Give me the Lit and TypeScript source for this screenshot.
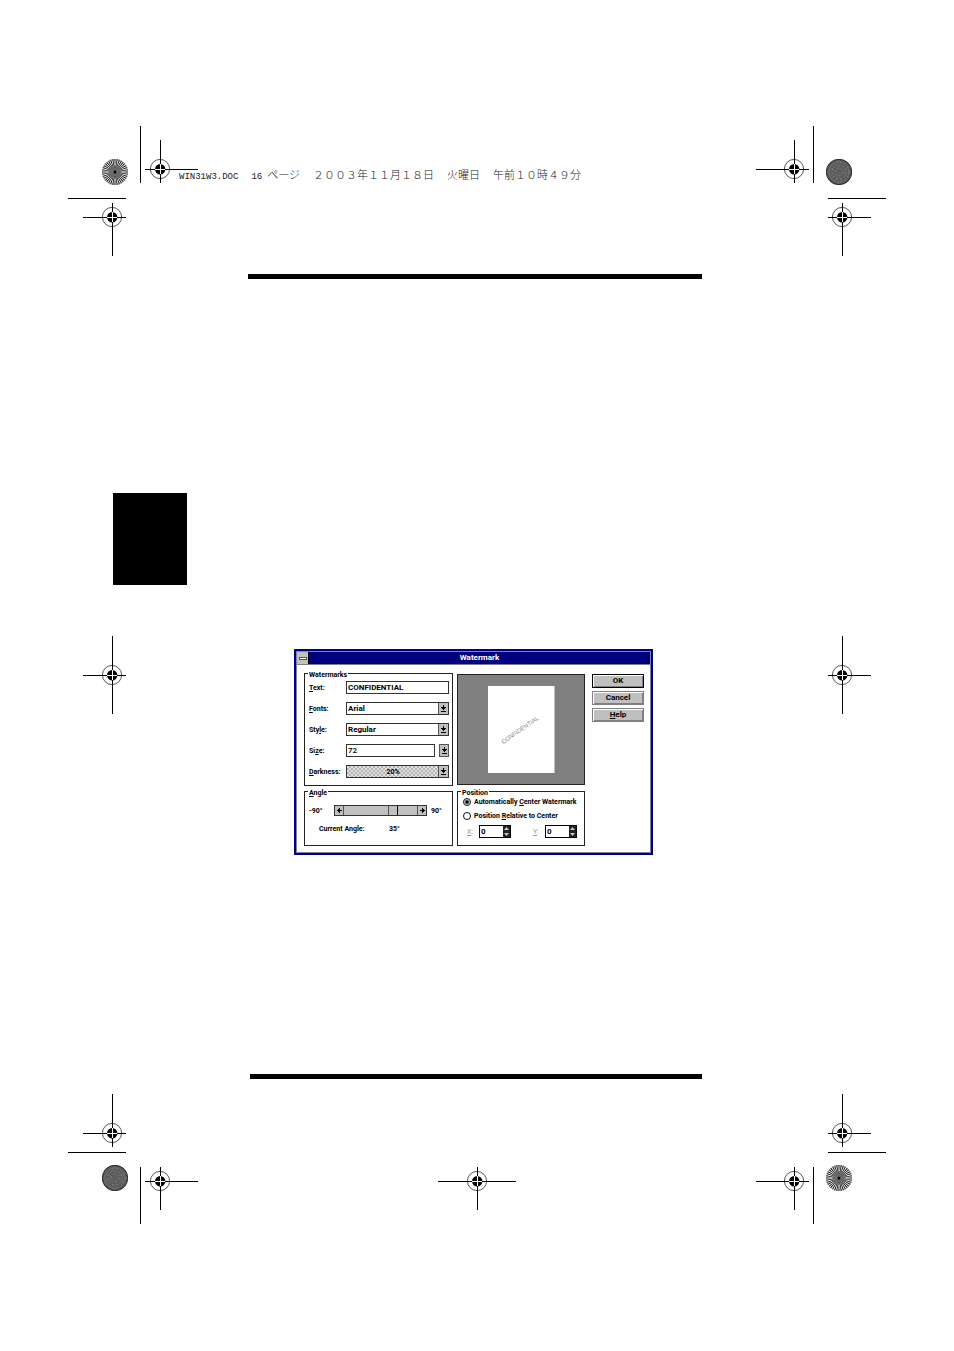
import { LitElement, html, svg, css } from "lit";
import { customElement, state } from "lit/decorators.js";

type Box = [x: number, y: number, left: number, right: number, top: number, bottom: number];

/* Registration mark centred on (x, y), with hairlines reaching to the given edges. */
const registration = ([x, y, left, right, top, bottom]: Box) => svg`
  <circle cx=${x} cy=${y} r="9.6" fill="none" stroke="#444" stroke-width="0.9" />
  <g shape-rendering="crispEdges">
    <rect x=${left} y=${y} width=${right - left} height="1" />
    <rect x=${x} y=${top} width="1" height=${bottom - top} />
  </g>
  <circle cx=${x + 0.2} cy=${y + 0.2} r="5.2" />
  <g fill="#fff" shape-rendering="crispEdges">
    <rect x=${x - 5} y=${y} width="10" height="1" />
    <rect x=${x} y=${y - 5} width="1" height="10" />
  </g>`;

const bar = (x: number, y: number, width: number, height: number) =>
  svg`<rect x=${x} y=${y} width=${width} height=${height} shape-rendering="crispEdges" />`;

/* Star target: tapering wedges on a pale disc, or a dense mesh on a dark one. */
const star = (x: number, y: number, dense: boolean) => {
  const count = dense ? 60 : 36;
  const point = (a: number, r: number) => `${x + r * Math.cos(a)} ${y + r * Math.sin(a)}`;
  const half = Math.PI / count / 2;
  const wedges = Array.from({ length: count }, (_, i) => {
    const a = (i * 2 * Math.PI) / count;
    return `M${x} ${y}L${point(a - half, 13)}L${point(a + half, 13)}z`;
  }).join("");
  return dense
    ? svg`
      <circle cx=${x} cy=${y} r="13" fill="#777" />
      <path d=${wedges} fill="#444" />
      <g fill="none" stroke="#888" stroke-width="0.8" stroke-dasharray="2 2">
        <circle cx=${x} cy=${y} r="4" /><circle cx=${x} cy=${y} r="7" /><circle cx=${x} cy=${y} r="10" />
      </g>
      <circle cx=${x} cy=${y} r="12.6" fill="none" stroke="#222" stroke-width="0.8" />`
    : svg`
      <circle cx=${x} cy=${y} r="7" fill="#ccc" />
      <path d=${wedges} />
      <circle cx=${x} cy=${y} r="12.6" fill="none" stroke="#777" stroke-width="0.6" />
      <circle cx=${x} cy=${y} r="1.5" />`;
};

const arrowDown = html`<svg width="5" height="7" viewBox="0 0 5 7" shape-rendering="crispEdges" aria-hidden="true">
  <path d="M2 0h1v2h2v1h-1v1h-1v1h-1v-1h-1v-1h-1v-1h2zM0 6h5v1h-5z" />
</svg>`;
const arrowLeft = html`<svg width="5" height="5" viewBox="0 0 5 5" shape-rendering="crispEdges" aria-hidden="true">
  <path d="M2 0h1v2h2v1h-2v2h-1v-1h-1v-1h-1v-1h1v-1h1z" />
</svg>`;
const arrowRight = html`<svg width="5" height="5" viewBox="0 0 5 5" shape-rendering="crispEdges" aria-hidden="true">
  <path d="M2 0h1v1h1v1h1v1h-1v1h-1v1h-1v-2h-2v-1h2z" />
</svg>`;

@customElement("watermark-dialog")
export class WatermarkDialog extends LitElement {
  @state() private angle = 35;

  static styles = css`
    :host {
      display: block;
      font: 700 7px/8px Roboto, "Liberation Sans", sans-serif;
      color: #000;
    }
    *, *::before, *::after { box-sizing: border-box; }
    .window {
      border: 2px solid #000080;
      background: #fff;
    }
    .inner { border: 1px solid #8080a0; }
    .title {
      display: flex;
      height: 13px;
      background: #000080;
      border-bottom: 1px solid #808080;
    }
    .title h1 {
      flex: 1;
      margin: 0;
      font-size: 8px;
      line-height: 12px;
      text-align: center;
      color: #fff;
    }
    button, input, select {
      margin: 0;
      padding: 0;
      font: inherit;
      color: inherit;
      border-radius: 0;
      appearance: none;
      outline: none;
      min-width: 0;
    }
    button {
      display: flex;
      align-items: center;
      justify-content: center;
      background: #c0c0c0;
      border: 1px solid #555;
    }
    .menu {
      width: 12px;
      height: 12px;
      border: 0;
      border-right: 1px solid #000;
    }
    .menu i {
      width: 8px;
      height: 3px;
      background: #fff;
      border: 1px solid #555;
    }
    .body {
      display: flex;
      gap: 7px;
      padding: 3px 6px 6px 7px;
    }
    .panels {
      flex: 1;
      display: grid;
      grid-template-columns: minmax(0, 149fr) minmax(0, 128fr);
      column-gap: 4px;
    }
    fieldset {
      margin: 0;
      min-width: 0;
      padding: 0 3px 7px 4px;
      border: 1px solid #222;
    }
    legend {
      padding: 3px 1px 0;
      margin-left: -1px;
      height: 11px;
    }
    u { text-underline-offset: 1px; text-decoration-thickness: 1px; }
    .fields {
      display: grid;
      grid-template-columns: 37px 1fr;
      grid-auto-rows: 13px;
      row-gap: 8px;
      align-items: center;
      padding-top: 2px;
    }
    .box {
      display: flex;
      height: 13px;
      border: 1px solid #333;
      font-size: 8px;
    }
    .box input, .box select {
      flex: 1;
      width: 100%;
      border: 0;
      padding-left: 1px;
      background: transparent;
    }
    .box .arrow {
      width: 10px;
      border-width: 0 0 0 1px;
    }
    .arrow {
      display: flex;
      align-items: center;
      justify-content: center;
      background: #c0c0c0;
      border: 0 solid #555;
      pointer-events: none;
    }
    .darkness {
      background: conic-gradient(#b4b4b4 25%, #e2e2e2 0 50%, #b4b4b4 0 75%, #e2e2e2 0) 0 0 / 4px 4px;
    }
    .darkness select { text-align: center; text-align-last: center; font-size: 7px; }
    .combo { display: flex; gap: 4px; }
    .combo .box { flex: 1; }
    .combo button { width: 10px; height: 13px; }
    .combo input { font-weight: 500; }
    .slider-row {
      display: grid;
      grid-template-columns: 21px minmax(0, 1fr) 18px;
      gap: 4px;
      align-items: center;
      padding-top: 8px;
    }
    .scroll {
      display: flex;
      height: 11px;
      background: #c0c0c0;
      border: 1px solid #333;
    }
    .scroll button { flex: none; width: 9px; border-width: 0 1px 0 0; }
    .scroll button:last-child { border-width: 0 0 0 1px; }
    .scroll input {
      flex: 1;
      width: 100%;
      height: 9px;
      background: transparent;
    }
    .scroll input::-webkit-slider-thumb {
      appearance: none;
      width: 10px;
      height: 9px;
      background: #c0c0c0;
      border: 1px solid #555;
      border-width: 0 1px;
      border-right-color: #000;
    }
    .current {
      display: grid;
      grid-template-columns: 70px 1fr;
      padding: 9px 0 0 10px;
    }
    .preview {
      display: grid;
      place-items: center;
      align-content: center;
      height: 111px;
      margin-top: 6px;
      background: #808080;
      border: 1px solid #222;
    }
    .paper {
      display: grid;
      place-items: center;
      width: 67px;
      height: 87px;
      background: #fff;
      border-right: 1px solid #c0c0c0;
    }
    .paper span {
      font: 400 6px/8px "Liberation Sans", sans-serif;
      color: #888;
      transform: rotate(-35deg);
    }
    .position { padding-left: 5px; }
    .position legend { margin-left: -2px; }
    .choice {
      display: flex;
      align-items: center;
      gap: 3px;
      height: 8px;
      margin-top: 6px;
      white-space: nowrap;
    }
    legend + .choice { margin-top: 1px; }
    .choice input {
      flex: none;
      width: 8px;
      height: 8px;
      border: 1px solid #111;
      border-radius: 50%;
      background: #fff;
    }
    .choice input:checked { background: radial-gradient(circle, #000 1px, #fff 3px); }
    .offsets {
      display: flex;
      align-items: center;
      gap: 22px;
      padding: 5px 0 0 4px;
    }
    .offset { display: flex; align-items: center; }
    .offset label {
      width: 12px;
      font-weight: 400;
      color: #999;
    }
    .offset .box { width: 32px; border-color: #000; }
    .spin { display: flex; flex-direction: column; }
    .spin button {
      flex: 1;
      width: 7px;
      border-width: 0;
      background: #222;
    }
    .spin svg { fill: #ccc; }
    .actions {
      display: flex;
      flex-direction: column;
      gap: 3px;
      width: 52px;
      padding-top: 6px;
    }
    .actions button {
      height: 14px;
      font-size: 8px;
      border: 1px solid #808080;
      box-shadow: inset 1px 1px #fff, inset -1px -1px #808080;
    }
    .actions .default { border-color: #000; }
  `;

  private select(id: string, label: unknown, value: string, extra = "") {
    return html`
      <label for=${id}>${label}</label>
      <div class="box ${extra}">
        <select id=${id}><option>${value}</option></select>
        <span class="arrow">${arrowDown}</span>
      </div>`;
  }

  private offset(id: string, label: string) {
    return html`
      <div class="offset">
        <label for=${id}><u>${label}</u>:</label>
        <div class="box">
          <input id=${id} type="text" inputmode="numeric" value="0" />
          <span class="spin">
            <button aria-label="Increase ${label}"><svg width="5" height="3" viewBox="0 0 5 3"><path d="M0 3L2.500 0L5 3z" /></svg></button>
            <button aria-label="Decrease ${label}"><svg width="5" height="3" viewBox="0 0 5 3"><path d="M0 0L2.500 3L5 0z" /></svg></button>
          </span>
        </div>
      </div>`;
  }

  private nudge(step: number) {
    this.angle = Math.max(-90, Math.min(90, this.angle + step));
  }

  render() {
    return html`
      <section class="window" aria-labelledby="title"><div class="inner">
        <header class="title">
          <button class="menu" aria-label="Control menu"><i></i></button>
          <h1 id="title">Watermark</h1>
        </header>
        <div class="body">
          <div class="panels">
            <fieldset>
              <legend>Watermarks</legend>
              <div class="fields">
                <label for="text"><u>T</u>ext:</label>
                <div class="box"><input id="text" type="text" value="CONFIDENTIAL" /></div>
                ${this.select("fonts", html`<u>F</u>onts:`, "Arial")}
                ${this.select("style", html`Sty<u>l</u>e:`, "Regular")}
                <label for="size">Si<u>z</u>e:</label>
                <div class="combo">
                  <div class="box"><input id="size" type="text" value="72" /></div>
                  <button aria-label="Choose size">${arrowDown}</button>
                </div>
                ${this.select("darkness", html`<u>D</u>arkness:`, "20%", "darkness")}
              </div>
            </fieldset>
            <div class="preview"><div class="paper"><span>CONFIDENTIAL</span></div></div>
            <fieldset>
              <legend><u>A</u>ngle</legend>
              <div class="slider-row">
                <span>-90°</span>
                <div class="scroll">
                  <button aria-label="Rotate left" @click=${() => this.nudge(-1)}>${arrowLeft}</button>
                  <input id="angle" type="range" min="-90" max="90" aria-label="Angle" .value=${String(this.angle)}
                    @input=${(e: Event) => (this.angle = Number((e.target as HTMLInputElement).value))} />
                  <button aria-label="Rotate right" @click=${() => this.nudge(1)}>${arrowRight}</button>
                </div>
                <span>90°</span>
              </div>
              <div class="current"><span>Current Angle:</span><output for="angle">${this.angle}°</output></div>
            </fieldset>
            <fieldset class="position">
              <legend>Position</legend>
              <label class="choice"><input type="radio" name="position" checked /><span>Automatically <u>C</u>enter Watermark</span></label>
              <label class="choice"><input type="radio" name="position" /><span>Position <u>R</u>elative to Center</span></label>
              <div class="offsets">${this.offset("x", "X")}${this.offset("y", "Y")}</div>
            </fieldset>
          </div>
          <div class="actions">
            <button class="default">OK</button>
            <button>Cancel</button>
            <button><span><u>H</u>elp</span></button>
          </div>
        </div>
      </div></section>`;
  }
}

@customElement("app-root")
export class AppRoot extends LitElement {
  static styles = css`
    :host { display: block; background: #fff; }
    .page {
      display: grid;
      grid-template-columns: 130px minmax(0, 1fr) 130px;
      padding: 126px 68px 127px;
    }
    svg { display: block; }
    .job {
      display: flex;
      align-items: baseline;
      align-self: start;
      gap: 13px;
      margin: 40px 0 0 -19px;
      font: 300 11px/16px "Noto Sans CJK JP", sans-serif;
      color: #222;
      white-space: nowrap;
    }
    .job .mono {
      font: 400 9px/16px "Liberation Mono", monospace;
    }
    .job .page-no { margin-right: 5px; }
    .side { display: flex; flex-direction: column; }
    .tab {
      width: 74px;
      height: 92px;
      margin: 237px 0 51px 45px;
      background: #000;
    }
    .right { padding-top: 380px; }
    .sheet { padding: 18px 54px 15px 50px; }
    .rule {
      height: 5px;
      margin: 0;
      border: 0;
      background: #000;
    }
    .foot-rule { margin-left: 2px; }
    watermark-dialog { margin: 370px 49px 219px 46px; }
    .foot { justify-self: center; margin-top: 73px; }
  `;

  render() {
    return html`
      <main class="page">
        <svg width="130" height="130" viewBox="68 126 130 130" aria-hidden="true">
          ${star(115, 172, false)}
          ${bar(140, 126, 1, 57)} ${bar(68, 198, 58, 1)}
          ${registration([160, 169, 145, 198, 140, 183])}
          ${registration([112, 217, 83, 126, 203, 256])}
        </svg>
        <div class="job">
          <span class="mono">WIN31W3.DOC</span>
          <span><span class="mono page-no">16</span>ページ</span>
          <span>２００３年１１月１８日</span>
          <span>火曜日</span>
          <span>午前１０時４９分</span>
        </div>
        <svg width="130" height="130" viewBox="756 126 130 130" aria-hidden="true">
          ${star(839, 172, true)}
          ${bar(813, 126, 1, 57)} ${bar(828, 198, 58, 1)}
          ${registration([794, 169, 756, 809, 140, 183])}
          ${registration([842, 217, 828, 871, 203, 256])}
        </svg>

        <div class="side">
          <div class="tab"></div>
          <svg width="130" height="78" viewBox="68 636 130 78" aria-hidden="true">
            ${registration([112, 675, 83, 126, 636, 714])}
          </svg>
        </div>
        <div class="sheet">
          <hr class="rule" />
          <watermark-dialog></watermark-dialog>
          <hr class="rule foot-rule" />
        </div>
        <div class="side right">
          <svg width="130" height="78" viewBox="756 636 130 78" aria-hidden="true">
            ${registration([842, 675, 828, 871, 636, 714])}
          </svg>
        </div>

        <svg width="130" height="130" viewBox="68 1094 130 130" aria-hidden="true">
          ${star(115, 1178, true)}
          ${bar(140, 1167, 1, 57)} ${bar(68, 1152, 58, 1)}
          ${registration([160, 1181, 145, 198, 1167, 1210])}
          ${registration([112, 1133, 83, 126, 1094, 1147])}
        </svg>
        <svg class="foot" width="78" height="43" viewBox="438 1167 78 43" aria-hidden="true">
          ${registration([477, 1181, 438, 516, 1167, 1210])}
        </svg>
        <svg width="130" height="130" viewBox="756 1094 130 130" aria-hidden="true">
          ${star(839, 1178, false)}
          ${bar(813, 1167, 1, 57)} ${bar(828, 1152, 58, 1)}
          ${registration([794, 1181, 756, 809, 1167, 1210])}
          ${registration([842, 1133, 828, 871, 1094, 1147])}
        </svg>
      </main>`;
  }
}
